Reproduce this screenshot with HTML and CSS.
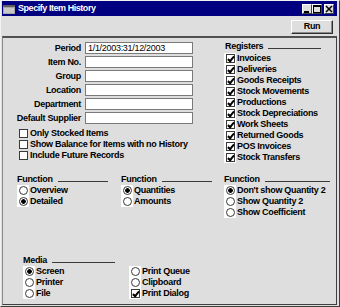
FILE: index.html
```html
<!DOCTYPE html>
<html lang="en">
<head>
    <meta charset="UTF-8">
    <meta name="viewport" content="width=device-width, initial-scale=1.0">
    <title>Specify Item History</title>
    <link rel="stylesheet" href="styles.css">
</head>
<body>

<div class="window">
    <div class="titlebar">
        <svg class="app-icon" width="12" height="9" viewBox="0 0 12 9">
            <rect x="0" y="0" width="12" height="9" fill="#a8a8a8"/>
            <rect x="0" y="0" width="12" height="2" fill="#606060"/>
            <rect x="1" y="3" width="10" height="5" fill="#c8c8c8"/>
        </svg>
        <span class="title">Specify Item History</span>
        <div class="win-buttons">
            <span class="wbtn">
                <svg width="8" height="8" viewBox="0 0 8 8"><rect x="1" y="6" width="5" height="2" fill="#000"/></svg>
            </span>
            <span class="wbtn">
                <svg width="8" height="8" viewBox="0 0 8 8"><rect x="0.5" y="0.5" width="7" height="7" fill="none" stroke="#000"/><rect x="0" y="0" width="8" height="2" fill="#000"/></svg>
            </span>
            <span class="wbtn close">
                <svg width="8" height="8" viewBox="0 0 8 8"><path d="M1 1L7 7M7 1L1 7" stroke="#000" stroke-width="1.5"/></svg>
            </span>
        </div>
    </div>

    <div class="toolbar">
        <button class="run">Run</button>
    </div>

    <div class="content">
        <div class="top">
            <div class="form">
                <div class="fields">
                    <label>Period</label><div class="field">1/1/2003:31/12/2003</div>
                    <label>Item No.</label><div class="field"></div>
                    <label>Group</label><div class="field"></div>
                    <label>Location</label><div class="field"></div>
                    <label>Department</label><div class="field"></div>
                    <label>Default Supplier</label><div class="field"></div>
                </div>
                <div class="options">
                    <div class="opt"><span class="box"></span>Only Stocked Items</div>
                    <div class="opt"><span class="box"></span>Show Balance for Items with no History</div>
                    <div class="opt"><span class="box"></span>Include Future Records</div>
                </div>
            </div>

            <div class="group registers">
                <div class="group-head"><span>Registers</span><i></i></div>
                <div class="opt"><span class="cell"><span class="box on"></span></span>Invoices</div>
                <div class="opt"><span class="cell"><span class="box on"></span></span>Deliveries</div>
                <div class="opt"><span class="cell"><span class="box on"></span></span>Goods Receipts</div>
                <div class="opt"><span class="cell"><span class="box on"></span></span>Stock Movements</div>
                <div class="opt"><span class="cell"><span class="box on"></span></span>Productions</div>
                <div class="opt"><span class="cell"><span class="box on"></span></span>Stock Depreciations</div>
                <div class="opt"><span class="cell"><span class="box on"></span></span>Work Sheets</div>
                <div class="opt"><span class="cell"><span class="box on"></span></span>Returned Goods</div>
                <div class="opt"><span class="cell"><span class="box on"></span></span>POS Invoices</div>
                <div class="opt"><span class="cell"><span class="box on"></span></span>Stock Transfers</div>
            </div>
        </div>

        <div class="functions">
            <div class="group fn-left">
                <div class="group-head"><span>Function</span><i></i></div>
                <div class="opt"><span class="cell"><span class="radio"></span></span>Overview</div>
                <div class="opt"><span class="cell"><span class="radio on"></span></span>Detailed</div>
            </div>
            <div class="group fn-mid">
                <div class="group-head"><span>Function</span><i></i></div>
                <div class="opt"><span class="cell"><span class="radio on"></span></span>Quantities</div>
                <div class="opt"><span class="cell"><span class="radio"></span></span>Amounts</div>
            </div>
            <div class="group fn-right">
                <div class="group-head"><span>Function</span><i></i></div>
                <div class="opt"><span class="cell"><span class="radio on"></span></span>Don't show Quantity 2</div>
                <div class="opt"><span class="cell"><span class="radio"></span></span>Show Quantity 2</div>
                <div class="opt"><span class="cell"><span class="radio"></span></span>Show Coefficient</div>
            </div>
        </div>

        <div class="group media">
            <div class="group-head"><span>Media</span><i></i></div>
            <div class="media-grid">
                <div class="opt"><span class="cell"><span class="radio on"></span></span>Screen</div>
                <div class="opt"><span class="cell"><span class="radio"></span></span>Print Queue</div>
                <div class="opt"><span class="cell"><span class="radio"></span></span>Printer</div>
                <div class="opt"><span class="cell"><span class="radio"></span></span>Clipboard</div>
                <div class="opt"><span class="cell"><span class="radio"></span></span>File</div>
                <div class="opt"><span class="cell"><span class="box on"></span></span>Print Dialog</div>
            </div>
        </div>
    </div>
</div>

</body>
</html>
```

FILE: styles.css
```css
* {
    box-sizing: border-box;
}
html, body {
    margin: 0;
    padding: 0;
    background-color: #dedede;
}
body {
    font-family: "Liberation Sans", Arial, sans-serif;
    font-size: 9px;
    font-weight: bold;
    letter-spacing: -0.3px;
    line-height: 11px;
    color: #000;
}
.window {
    width: 340px;
    height: 307px;
    display: flex;
    flex-direction: column;
    background-color: #dedede;
    border: 1px solid;
    border-color: #f2f2f2 #404040 #404040 #f2f2f2;
    padding: 0 2px 1px 1px;
}

/* title bar */
.titlebar {
    height: 15px;
    flex: none;
    display: flex;
    align-items: center;
    background-color: #000080;
    padding: 0 3px 0 1px;
}
.app-icon {
    display: block;
    margin-top: 1px;
}
.title {
    color: #fff;
    margin-left: 3px;
    letter-spacing: -0.45px;
}
.win-buttons {
    margin-left: auto;
    display: flex;
}
.wbtn {
    width: 10px;
    height: 10px;
    display: flex;
    align-items: center;
    justify-content: center;
    background-color: #dedede;
    border: 1px solid;
    border-color: #fff #404040 #404040 #fff;
}
.wbtn.close {
    margin-left: 2px;
}
.wbtn svg {
    display: block;
}

/* toolbar */
.toolbar {
    height: 20px;
    flex: none;
    display: flex;
    align-items: center;
    justify-content: flex-end;
    padding-right: 4px;
}
.run {
    width: 42px;
    height: 14px;
    margin-top: 1px;
    padding: 0;
    font: inherit;
    letter-spacing: inherit;
    background-color: #dedede;
    border: 1px solid;
    border-color: #fff #303030 #303030 #fff;
    box-shadow: inset -1px -1px #8a8a8a;
}

/* main area */
.content {
    flex: 1;
    border-top: 2px solid;
    border-top-color: #505050;
    border-left: 1px solid #8a8a8a;
    border-right: 1px solid #404040;
    border-bottom: 1px solid #404040;
}
.top {
    display: flex;
    padding-top: 3px;
}
.form {
    width: 221px;
    margin-top: 1px;
}
.fields {
    display: grid;
    grid-template-columns: 78px 108px;
    grid-auto-rows: 12px;
    column-gap: 4px;
    row-gap: 2px;
}
.fields label {
    text-align: right;
    line-height: 12px;
}
.field {
    background-color: #fff;
    border: 1px solid #7a7a7a;
    font-weight: normal;
    line-height: 10px;
    padding-left: 2px;
}
.options {
    margin-top: 4px;
    padding-left: 16px;
}
.opt {
    height: 11px;
    display: flex;
    align-items: center;
    white-space: nowrap;
}
.options .box {
    margin-right: 2px;
}

/* indicators */
.cell {
    width: 12px;
    height: 11px;
    flex: none;
    display: flex;
    align-items: center;
    justify-content: center;
    background-color: #fff;
    margin-right: 1px;
}
.box {
    width: 9px;
    height: 9px;
    flex: none;
    position: relative;
    background-color: #fff;
    border: 1px solid #3a3a3a;
}
.box.on::after {
    content: "";
    position: absolute;
    left: 2px;
    top: 0;
    width: 2px;
    height: 5px;
    border: solid #000;
    border-width: 0 2px 2px 0;
    transform: rotate(40deg);
}
.radio {
    width: 9px;
    height: 9px;
    flex: none;
    border-radius: 50%;
    border: 1px solid #3a3a3a;
    background: #fff;
}
.radio.on {
    background: radial-gradient(circle, #000 0 2px, #fff 2.6px);
}

/* groups */
.group-head {
    height: 11px;
    display: flex;
}
.group-head i {
    flex: 1;
    height: 8px;
    margin-left: 5px;
    border-bottom: 1px solid #3a3a3a;
}
.registers {
    width: 97px;
}
.registers .group-head {
    margin-left: 1px;
    margin-bottom: 1px;
}
.functions {
    display: flex;
    margin-top: 11px;
    padding-left: 14px;
}
.fn-left, .fn-mid {
    width: 91px;
}
.fn-mid {
    margin-left: 13px;
}
.fn-right {
    width: 106px;
    margin-left: 12px;
}
.media {
    width: 200px;
    margin-top: 37px;
    margin-left: 20px;
}
.media .group-head {
    width: 92px;
}
.media-grid {
    display: grid;
    grid-template-columns: 106px 1fr;
}
```
